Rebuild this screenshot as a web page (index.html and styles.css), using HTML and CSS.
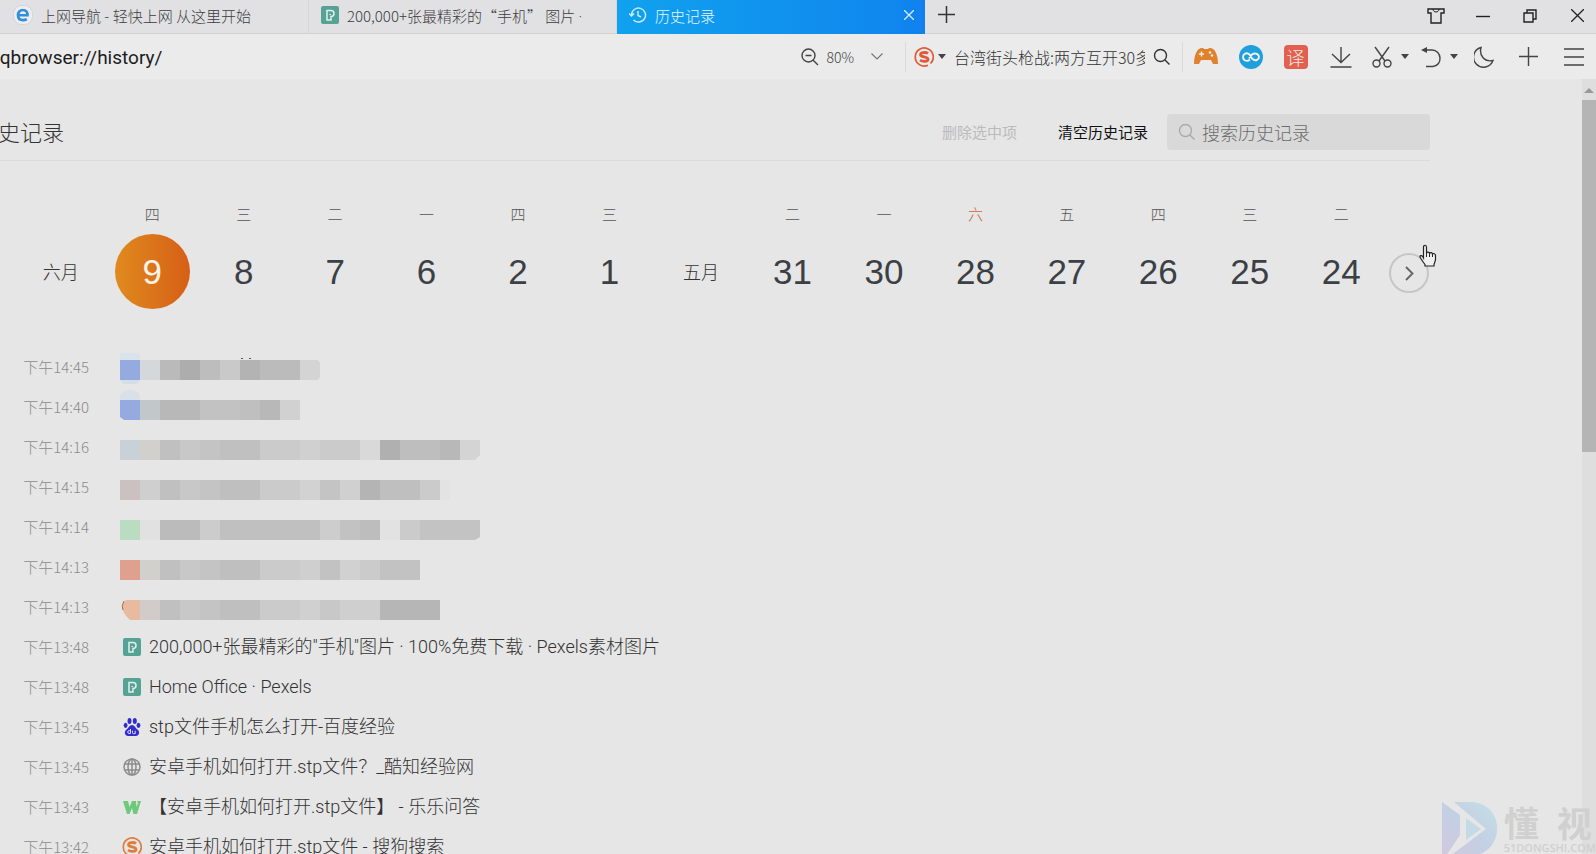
FILE: index.html
```html
<!DOCTYPE html>
<html lang="zh-CN">
<head>
<meta charset="utf-8">
<title>历史记录</title>
<link rel="stylesheet" href="styles.css">
</head>
<body>
<svg class="defs" width="0" height="0" aria-hidden="true">
  <defs>
    <symbol id="pexels" viewBox="0 0 18 18"><rect width="18" height="18" rx="2" fill="#56a396"/><path d="M6 14V4.500h4a3 3 0 0 1 3 3c0 1.800-1.200 3-3 3V14z" fill="none" stroke="#e3efec" stroke-width="1.500"/><path d="M8.500 8.500h1.500" stroke="#e3efec"/></symbol>
    <symbol id="sogou" viewBox="0 0 20 20"><path d="M16.500 16.500A9 9 0 1 0 14 18.200" fill="none" stroke="currentColor" stroke-width="1.700"/><path d="M14 6.500C12 5 6.500 5 6.500 7.700c0 2.800 7.500 1.600 7.500 4.500 0 2.700-5.500 2.700-8 1" fill="none" stroke="currentColor" stroke-width="2.800"/></symbol>
    <symbol id="search" viewBox="0 0 18 18"><circle cx="7.500" cy="7.500" r="6" fill="none" stroke="currentColor" stroke-width="1.400"/><path d="M12 12l4.500 4.500" stroke="currentColor" stroke-width="1.400"/></symbol>
    <symbol id="caret" viewBox="0 0 8 5"><path d="M0 0h8L4 5z" fill="currentColor"/></symbol>
  </defs>
</svg>

<header class="browser">
  <nav class="tabs" aria-label="标签页">
    <a class="tab" href="#nav">
      <svg class="icon20" viewBox="0 0 20 20"><rect x=".500" y=".500" width="19" height="19" rx="8" fill="#ededf1" stroke="#d3d3da"/><path d="M5 10.300h9.500C14.600 7 12.800 5 10 5a4.900 4.900 0 0 0-5 5.200c0 3 2 4.900 5 4.900 1.500 0 2.700-.300 3.800-1" fill="none" stroke="#2f8fd8" stroke-width="2.600"/></svg>
      <span class="tab-title">上网导航 - 轻快上网 从这里开始</span>
    </a>
    <a class="tab" href="#pexels-page">
      <svg class="icon18"><use href="#pexels"/></svg>
      <span class="tab-title">200,000+张最精彩的“手机” 图片 <span class="latin">·</span></span>
    </a>
    <a class="tab tab-active" href="#history" aria-current="page">
      <svg class="icon18" viewBox="0 0 18 18" fill="none" stroke="#c9ecff" stroke-width="1.500"><path d="M2.500 9a7 7 0 1 1 2 5M0 7.500l2.500 2.500L5 7.500M9 5v4.500l3 1.500"/></svg>
      <span class="tab-title">历史记录</span>
    </a>
    <button class="tab-close" aria-label="关闭标签"><svg width="10" height="10" viewBox="0 0 10 10"><path d="M0 0l10 10M10 0L0 10" stroke="#d4ebff" stroke-width="1.300"/></svg></button>
    <button class="tab-new" aria-label="新标签"><svg width="17" height="17" viewBox="0 0 17 17"><path d="M8.500 0v17M0 8.500h17" stroke="#333" stroke-width="1.500"/></svg></button>
    <div class="window-buttons">
      <button aria-label="皮肤"><svg width="18" height="16" viewBox="0 0 18 16" fill="none" stroke="#222" stroke-width="1.400"><path d="M1 1h16v4h-3v10H4V5H1z"/><path d="M6 1c0 4 6 4 6 0" stroke-width="1"/></svg></button>
      <button aria-label="最小化"><svg width="14" height="14" viewBox="0 0 14 14"><path d="M0 7.500h14" stroke="#222" stroke-width="1.400"/></svg></button>
      <button aria-label="还原"><svg width="14" height="14" viewBox="0 0 14 14" fill="none" stroke="#222" stroke-width="1.400"><path d="M1 4h9v9H1zM4 4V1h9v9h-3"/></svg></button>
      <button aria-label="关闭"><svg width="13" height="13" viewBox="0 0 13 13"><path d="M0 0l13 13M13 0L0 13" stroke="#222" stroke-width="1.300"/></svg></button>
    </div>
  </nav>

  <div class="toolbar">
    <div class="address"><input class="address-input" aria-label="地址" value="qqbrowser://history/"></div>
    <button class="zoom" aria-label="缩放 80%">
      <svg class="icon18" viewBox="0 0 18 18" fill="none" stroke="#444" stroke-width="1.400"><circle cx="7.500" cy="7.500" r="6.500"/><path d="M12.200 12.200L17 17M4.500 7.500h6"/></svg>
      <span>80%</span>
      <svg class="zoom-arrow" width="12" height="7" viewBox="0 0 12 7"><path d="M.500 .500l5.500 5.500 5.500-5.500" fill="none" stroke="#777" stroke-width="1.200"/></svg>
    </button>
    <div class="websearch">
      <button class="engine" aria-label="搜狗"><svg class="icon20"><use href="#sogou"/></svg><svg class="caret"><use href="#caret"/></svg></button>
      <input class="websearch-input" aria-label="网页搜索" value="台湾街头枪战:两方互开30多枪">
      <button aria-label="搜索"><svg class="icon18"><use href="#search"/></svg></button>
    </div>
    <div class="tools">
      <button aria-label="游戏"><svg width="24" height="17" viewBox="0 0 24 17"><path d="M3 3q1-2 4-3h2l1 1h4l1-1h2q3 1 4 3 3 5 3 13h-5l-2-4H7l-2 4H0Q0 8 3 3z" fill="#e0812b"/><path d="M7.500 3.500v5M5 6h5" stroke="#ececec" stroke-width="1.500"/><circle cx="16" cy="4.500" r="1.200" fill="#ececec"/><circle cx="18" cy="7.500" r="1.200" fill="#ececec"/></svg></button>
      <button aria-label="无限"><svg width="24" height="24" viewBox="0 0 24 24"><circle cx="12" cy="12" r="12" fill="#1f9fdc"/><path d="M11 14.500C7.500 17.500 4 15 4 12s3.500-5.500 7-2l2 3.500c3.500 3.500 7 1 7-1.500s-3.500-5-7-2.500l-3 4" fill="none" stroke="#f0f5f8" stroke-width="1.900"/></svg></button>
      <button aria-label="翻译"><span class="translate">译</span></button>
      <button aria-label="下载"><svg width="22" height="22" viewBox="0 0 22 22" fill="none" stroke="#444" stroke-width="1.400"><path d="M11 1v15M2 8l9 8.500L20 8M.500 21h21"/></svg></button>
      <button class="with-caret" aria-label="截图"><svg width="20" height="22" viewBox="0 0 20 22" fill="none" stroke="#444" stroke-width="1.400"><path d="M3 1l10 14M17 1L7 15"/><circle cx="4.500" cy="17.500" r="3.500"/><circle cx="15.500" cy="17.500" r="3.500"/></svg><svg class="caret"><use href="#caret"/></svg></button>
      <button class="with-caret" aria-label="恢复"><svg width="20" height="22" viewBox="0 0 20 22" fill="none" stroke="#444" stroke-width="1.400"><path d="M2 4h9c10 0 11 15.500 1 16.500H5"/><path d="M0 4l6-3v6z" fill="#444" stroke="none"/></svg><svg class="caret"><use href="#caret"/></svg></button>
      <button aria-label="夜间"><svg width="20" height="22" viewBox="0 0 20 22"><path d="M7 1.500A10 10 0 1 0 19 14.500C10 16.500 5 9 7 1.500z" fill="none" stroke="#444" stroke-width="1.400"/></svg></button>
      <button aria-label="添加"><svg width="19" height="19" viewBox="0 0 19 19"><path d="M9.500 0v19M0 9.500h19" stroke="#444" stroke-width="1.400"/></svg></button>
      <button aria-label="菜单"><svg width="20" height="18" viewBox="0 0 20 18"><path d="M0 1h20M0 9h20M0 17h20" stroke="#444" stroke-width="1.400"/></svg></button>
    </div>
  </div>
</header>

<div class="viewport">
  <main class="page">
    <div class="page-head">
      <h1 class="page-title">历史记录</h1>
      <button class="action" disabled>删除选中项</button>
      <button class="action">清空历史记录</button>
      <label class="history-search"><svg class="icon18"><use href="#search"/></svg><input aria-label="搜索历史记录" placeholder="搜索历史记录"></label>
    </div>

    <div class="calendar">
      <div class="days">
        <div class="month">六月</div>
        <button class="day day-active"><span class="week">四</span><span class="num">9</span></button>
        <button class="day"><span class="week">三</span><span class="num">8</span></button>
        <button class="day"><span class="week">二</span><span class="num">7</span></button>
        <button class="day"><span class="week">一</span><span class="num">6</span></button>
        <button class="day"><span class="week">四</span><span class="num">2</span></button>
        <button class="day"><span class="week">三</span><span class="num">1</span></button>
        <div class="month">五月</div>
        <button class="day"><span class="week">二</span><span class="num">31</span></button>
        <button class="day"><span class="week">一</span><span class="num">30</span></button>
        <button class="day day-weekend"><span class="week">六</span><span class="num">28</span></button>
        <button class="day"><span class="week">五</span><span class="num">27</span></button>
        <button class="day"><span class="week">四</span><span class="num">26</span></button>
        <button class="day"><span class="week">三</span><span class="num">25</span></button>
        <button class="day"><span class="week">二</span><span class="num">24</span></button>
      </div>
      <button class="more" aria-label="更早"><svg width="9" height="15" viewBox="0 0 9 15"><path d="M1 1l6.500 6.500L1 14" fill="none" stroke="#666" stroke-width="1.900"/></svg>
        <svg class="pointer" width="18" height="24" viewBox="0 0 18 24"><path d="M4.500 14V3.200c0-2.600 3-2.600 3 0V9c.500-1.300 2.800-1.200 3 .300.700-1 2.700-.800 2.900.700 1-1 3.100-.300 3.100 1.500v4c0 2-1.500 3.500-1.500 5.500V22H6v-1.500C4 18 2.500 15.500 1.200 13.500c-.700-2 1.300-2.500 2.300-1.200z" fill="#f0f0f0" stroke="#222" stroke-width="1.200"/><path d="M7.500 9v4M10.500 9.500V13M13.500 10v3" stroke="#222"/></svg>
      </button>
    </div>

    <ul class="history">
      <li class="row"><time class="time">下午14:45</time><svg class="mosaic" viewBox="0 0 360 40"><path fill="#dae3eb" d="M2 6h16l2 2v5H0V7z"/><path fill="#d2dfe6" d="M0 33h20v1l-4 3H3z"/><path fill="#95abdf" d="M0 13h20v20H0z"/><path fill="#d4d8da" d="M20 13h20v20H20z"/><path fill="#bababa" d="M40 13h20v20H40z"/><path fill="#adadad" d="M60 13h20v20H60z"/><path fill="#bdbdbd" d="M80 13h20v20H80z"/><path fill="#c9c9c9" d="M100 13h20v20h-20z"/><path fill="#b3b3b3" d="M120 13h20v20h-20z"/><path fill="#bbb" d="M140 13h40v20h-40z"/><path fill="#d4d4d4" d="M180 13h16q4 0 4 4v12q0 4-4 4h-16z"/><path fill="#555" d="M121 11h2v1h-2zM129 11h2v1h-2z"/></svg></li>
      <li class="row"><time class="time">下午14:40</time><svg class="mosaic" viewBox="0 0 360 40"><path fill="#dae0ea" d="M0 13V7q10-9 20 0v6z"/><path fill="#95abdf" d="M0 13h20v20H4l-4-3z"/><path fill="#c2c8ca" d="M20 13h20v20H20z"/><path fill="#b8b8b8" d="M40 13h40v20H40z"/><path fill="#c2c2c2" d="M80 13h40v20H80z"/><path fill="#bfbfbf" d="M120 13h20v20h-20z"/><path fill="#b8b8b8" d="M140 13h20v20h-20z"/><path fill="#d1d1d1" d="M160 13h20v20h-20z"/></svg></li>
      <li class="row"><time class="time">下午14:16</time><svg class="mosaic" viewBox="0 0 360 40"><path fill="#c8d0d8" d="M0 13h20v20H0z"/><path fill="#d2d0cd" d="M20 13h20v20H20z"/><path fill="#c0c0c0" d="M40 13h20v20H40z"/><path fill="#c8c8c8" d="M60 13h20v20H60z"/><path fill="#c4c4c4" d="M80 13h20v20H80z"/><path fill="#c0c0c0" d="M100 13h40v20h-40z"/><path fill="#cbcbcb" d="M140 13h40v20h-40z"/><path fill="#d0d0d0" d="M180 13h20v20h-20z"/><path fill="#cbcbcb" d="M200 13h40v20h-40z"/><path fill="#d9d9d9" d="M240 13h20v20h-20z"/><path fill="#b0b0b0" d="M260 13h20v20h-20z"/><path fill="#bebebe" d="M280 13h40v20h-40z"/><path fill="#b8b8b8" d="M320 13h20v20h-20z"/><path fill="#d4d4d4" d="M340 13h20v15l-5 5h-15z"/></svg></li>
      <li class="row"><time class="time">下午14:15</time><svg class="mosaic" viewBox="0 0 360 40"><path fill="#cbc1c1" d="M0 13h20v20H0z"/><path fill="#cfcfcf" d="M20 13h20v20H20z"/><path fill="#c0c0c0" d="M40 13h20v20H40z"/><path fill="#c8c8c8" d="M60 13h20v20H60z"/><path fill="#c4c4c4" d="M80 13h20v20H80z"/><path fill="#bfbfbf" d="M100 13h40v20h-40z"/><path fill="#cbcbcb" d="M140 13h40v20h-40z"/><path fill="#d2d2d2" d="M180 13h20v20h-20z"/><path fill="#c4c4c4" d="M200 13h20v20h-20z"/><path fill="#d0d0d0" d="M220 13h20v20h-20z"/><path fill="#b4b4b4" d="M240 13h20v20h-20z"/><path fill="#bfbfbf" d="M260 13h40v20h-40z"/><path fill="#cbcbcb" d="M300 13h20v20h-20z"/><path fill="#e3e3e3" d="M320 13h10v20h-10z"/></svg></li>
      <li class="row"><time class="time">下午14:14</time><svg class="mosaic" viewBox="0 0 360 40"><path fill="#badcc0" d="M0 13h20v20H0z"/><path fill="#e0e1e0" d="M20 13h20v20H20z"/><path fill="#bbb" d="M40 13h40v20H40z"/><path fill="#ccc" d="M80 13h20v20H80z"/><path fill="#c0c0c0" d="M100 13h100v20H100z"/><path fill="#cdcdcd" d="M200 13h20v20h-20z"/><path fill="#c2c2c2" d="M220 13h20v20h-20z"/><path fill="#bdbdbd" d="M240 13h20v20h-20z"/><path fill="#e2e2e2" d="M260 13h20v20h-20z"/><path fill="#cbcbcb" d="M280 13h20v20h-20z"/><path fill="#c3c3c3" d="M300 13h60v17l-5 3h-55z"/></svg></li>
      <li class="row"><time class="time">下午14:13</time><svg class="mosaic" viewBox="0 0 360 40"><path fill="#e0a090" d="M0 13h20v20H0z"/><path fill="#d2d0cd" d="M20 13h20v20H20z"/><path fill="#c0c0c0" d="M40 13h20v20H40z"/><path fill="#c8c8c8" d="M60 13h20v20H60z"/><path fill="#c4c4c4" d="M80 13h20v20H80z"/><path fill="#bfbfbf" d="M100 13h40v20h-40z"/><path fill="#cbcbcb" d="M140 13h40v20h-40z"/><path fill="#cfcfcf" d="M180 13h20v20h-20z"/><path fill="#c2c2c2" d="M200 13h20v20h-20z"/><path fill="#d1d1d1" d="M220 13h20v20h-20z"/><path fill="#cbcbcb" d="M240 13h20v20h-20z"/><path fill="#c2c2c2" d="M260 13h40v20h-40z"/></svg></li>
      <li class="row"><time class="time">下午14:13</time><svg class="mosaic" viewBox="0 0 360 40"><path fill="#e8bba0" d="M6 13h14v20H10q-13-12-4-20z"/><path fill="none" stroke="#a56b45" d="M4 14q-3 5-1 9"/><path fill="#d1cbc9" d="M20 13h20v20H20z"/><path fill="#c0c0c0" d="M40 13h20v20H40z"/><path fill="#c8c8c8" d="M60 13h20v20H60z"/><path fill="#c4c4c4" d="M80 13h20v20H80z"/><path fill="#bfbfbf" d="M100 13h40v20h-40z"/><path fill="#cbcbcb" d="M140 13h40v20h-40z"/><path fill="#d0d0d0" d="M180 13h20v20h-20z"/><path fill="#c8c8c8" d="M200 13h20v20h-20z"/><path fill="#cfcfcf" d="M220 13h40v20h-40z"/><path fill="#b6b6b6" d="M260 13h60v20h-60z"/></svg></li>
      <li class="row"><time class="time">下午13:48</time><a class="entry" href="#1"><svg class="icon18"><use href="#pexels"/></svg>200,000+张最精彩的"手机"图片 · 100%免费下载 · Pexels素材图片</a></li>
      <li class="row"><time class="time">下午13:48</time><a class="entry" href="#2"><svg class="icon18"><use href="#pexels"/></svg>Home Office · Pexels</a></li>
      <li class="row"><time class="time">下午13:45</time><a class="entry" href="#3"><svg class="icon18" viewBox="0 0 18 18"><g fill="#322cd0"><ellipse cx="6.500" cy="3" rx="2" ry="3"/><ellipse cx="11.800" cy="3" rx="2" ry="3"/><ellipse cx="2.600" cy="7.300" rx="1.900" ry="2.600"/><ellipse cx="15.500" cy="7.300" rx="1.900" ry="2.600"/><path d="M9 7c2.500 0 3.500 3 5.500 4.500 3 2.500 1.500 6.500-1.500 6.500H5c-3 0-4.500-4-1.500-6.500C5.500 10 6.500 7 9 7z"/></g><path d="M7.500 11v4.500H6q-1.300-.200-1.300-1.500T6 12.700h1.500M9.500 12.700v2q0 .900 1 .900h1.700v-2.900" fill="none" stroke="#d9dcf2"/></svg>stp文件手机怎么打开-百度经验</a></li>
      <li class="row"><time class="time">下午13:45</time><a class="entry" href="#4"><svg class="icon18" viewBox="0 0 18 18" fill="none" stroke="#8c8c8c" stroke-width="1.500"><circle cx="9" cy="9" r="8"/><ellipse cx="9" cy="9" rx="4" ry="8"/><path d="M9 1v16M1.500 6h15M1.500 12h15"/></svg>安卓手机如何打开.stp文件？_酷知经验网</a></li>
      <li class="row"><time class="time">下午13:43</time><a class="entry" href="#5"><svg class="icon18" viewBox="0 0 18 18"><path d="M0 3h5l1.500 6L9 3h4l.500 6L15 5l-1-2h4l-4 13h-3.500L9 10l-2.500 6H4z" fill="#6fc97b"/></svg>【安卓手机如何打开.stp文件】 - 乐乐问答</a></li>
      <li class="row"><time class="time">下午13:42</time><a class="entry entry-sogou" href="#6"><svg class="icon20"><use href="#sogou"/></svg><span>安卓手机如何打开.stp文件 - 搜狗搜索</span></a></li>
    </ul>
  </main>
  <div class="scrollbar" aria-hidden="true">
    <svg width="10" height="5" viewBox="0 0 10 5"><path d="M0 5h10L5 0z" fill="#999"/></svg>
    <div class="thumb"></div>
  </div>
</div>

<div class="watermark">
  <svg width="56" height="54" viewBox="0 0 56 54"><defs><linearGradient id="wm" x1="0" y1="1" x2="1" y2="0"><stop offset="0" stop-color="#d2c8e0"/><stop offset=".500" stop-color="#c3d0e4"/><stop offset="1" stop-color="#c4e0e6"/></linearGradient></defs><path d="M0 0l18 13v20L4 54H0zM12 0h18c34 2 34 52-2 54H8l36-27z" fill="url(#wm)"/><path d="M24 16v22l15-11z" fill="#c4dbe6"/></svg>
  <div class="watermark-text"><span class="watermark-name"><span>懂</span><span>视</span></span><span class="watermark-site">51DONGSHI.COM</span></div>
</div>
</body>
</html>
```
FILE: styles.css
```css
* { box-sizing: border-box; }

html, body { height: 100%; }

body {
  margin: 0;
  display: flex;
  flex-direction: column;
  overflow: hidden;
  position: relative;
  background: #e6e6e6;
  color: #333;
  font-family: "Noto Sans CJK SC", sans-serif;
  font-weight: 300;
}

button, input {
  font: inherit;
  color: inherit;
  border: 0;
  padding: 0;
  margin: 0;
  background: none;
  outline: 0;
}

button { display: flex; align-items: center; justify-content: center; }
a { color: inherit; text-decoration: none; }
svg { flex: none; display: block; }

.defs { position: absolute; }
.icon18 { width: 18px; height: 18px; }
.icon20 { width: 20px; height: 20px; }
.caret { width: 8px; height: 5px; color: #444; }
.latin { font-family: Roboto, sans-serif; }

/* Tab strip */
.browser { flex: none; }

.tabs {
  display: flex;
  height: 34px;
  padding-left: 1px;
  background: #e1e1e3;
  box-shadow: inset 0 -1px #d2d2d4;
}

.tab {
  flex: 0 1 308px;
  min-width: 0;
  display: flex;
  align-items: center;
  gap: 8px;
  padding: 0 12px 4px;
  border-right: 1px solid #d6d6d9;
  font-size: 15px;
  color: #3c3c40;
}

.tab-title { white-space: nowrap; overflow: hidden; }

.tab-active {
  flex-basis: 276px;
  border: 0;
  background: linear-gradient(90deg, #10a2ee, #1087ee);
  color: #e9f7ff;
}

.tab-close { width: 32px; padding-bottom: 4px; background: linear-gradient(90deg, #1087ee, #1080ee); }
.tab-new { width: 42px; padding-bottom: 5px; }

.window-buttons {
  display: flex;
  gap: 23px;
  margin-left: auto;
  padding: 0 7px 3px 0;
}

.window-buttons button { width: 24px; }

/* Toolbar */
.toolbar {
  display: flex;
  align-items: center;
  height: 45px;
  background: #ebebeb;
}

.address { flex: 1; min-width: 0; overflow: hidden; }

.address-input {
  width: 100%;
  margin-left: -11px;
  font-family: Roboto, sans-serif;
  font-size: 19px;
  font-weight: 400;
  color: #1c1c1c;
}

.zoom { gap: 7px; font-size: 14px; color: #444; padding-right: 22px; }
.zoom-arrow { margin-left: 10px; }

.websearch {
  display: flex;
  align-items: center;
  gap: 8px;
  width: 278px;
  height: 30px;
  padding: 0 11px 0 8px;
  border-left: 1px solid #dadada;
  border-right: 1px solid #dadada;
  font-size: 16px;
  color: #333;
}

.engine { gap: 4px; color: #e05a3a; }
.websearch-input { flex: 1; min-width: 0; }

.tools { display: flex; }
.tools button { width: 45px; height: 45px; }
.tools .with-caret { width: 49px; gap: 9px; padding-left: 5px; }

.translate {
  width: 24px;
  height: 24px;
  border-radius: 4px;
  background: #e2604f;
  color: #f7e9e6;
  font-size: 18px;
  line-height: 24px;
  text-align: center;
}

/* History page */
.viewport { flex: 1; min-height: 0; display: flex; overflow: hidden; }
.page { flex: 1; min-width: 0; padding-right: 152px; }

.page-head {
  display: flex;
  align-items: center;
  height: 82px;
  padding-top: 24px;
  border-bottom: 1px solid #dbdbdb;
}

.page-title {
  flex: 1;
  margin: 0 0 2px -24px;
  font-size: 22px;
  font-weight: 300;
  white-space: nowrap;
}

.action { margin-right: 41px; font-size: 15px; font-weight: 400; color: #111; white-space: nowrap; }
.action + .action { margin-right: 19px; }
.action:disabled { color: #bbb; }

.history-search {
  display: flex;
  align-items: center;
  gap: 6px;
  width: 263px;
  height: 36px;
  padding-left: 11px;
  border-radius: 4px;
  background: #d9d9d9;
  color: #aaa;
}

.history-search input { flex: 1; min-width: 0; font-size: 18px; color: #444; }
.history-search input::placeholder { color: #6c6c6c; opacity: 1; }

.calendar {
  display: flex;
  padding: 43px 0 0 15px;
}

.days { flex: 1; display: grid; grid-template-columns: repeat(15, 1fr); }

.month {
  align-self: end;
  font-size: 18px;
  line-height: 75px;
  text-align: center;
}

.day { flex-direction: column; gap: 10px; }
.week { font-size: 15px; line-height: 20px; color: #555; }
.day-weekend .week { color: #c7673a; }

.num {
  width: 75px;
  border-radius: 50%;
  font-family: "Liberation Sans", Arial, sans-serif;
  font-size: 35px;
  font-weight: 400;
  line-height: 75px;
  color: #3b4045;
}

.day-active .num { background: linear-gradient(90deg, #e08a1e, #d65f17); color: #fdf3e6; }

.more {
  position: relative;
  width: 40px;
  height: 40px;
  margin: 49px 1px 0 2px;
  border: 2px solid #c6c6c6;
  border-radius: 50%;
}

.pointer { position: absolute; left: 28px; top: -11px; }

.history { list-style: none; margin: 0; padding: 38px 0 0; }

.row { display: flex; height: 40px; line-height: 40px; }

.time { width: 89px; margin-right: 31px; text-align: right; font-size: 15px; color: #8c8c8c; }

.mosaic { width: 360px; height: 40px; }

.entry {
  display: flex;
  align-items: center;
  gap: 8px;
  padding-left: 3px;
  font-family: Roboto, "Noto Sans CJK SC", sans-serif;
  font-size: 18px;
  white-space: nowrap;
}

.entry-sogou { gap: 7px; padding-left: 2px; }
.entry-sogou svg { color: #e07c3c; }

.scrollbar {
  width: 14px;
  padding-top: 9px;
  display: flex;
  flex-direction: column;
  align-items: center;
  gap: 7px;
  background: #dedede;
}

.thumb { width: 100%; height: 46%; background: #b5b5b5; }

/* Corner watermark over the page */
.watermark {
  position: absolute;
  right: 0;
  bottom: -2px;
  display: flex;
  gap: 6px;
  color: #d0d0d0;
  font-weight: 700;
}

.watermark-text { display: flex; flex-direction: column; }
.watermark-name { display: flex; gap: 18px; font-size: 35px; line-height: 40px; }
.watermark-site { font-family: "Open Sans", sans-serif; font-size: 11px; line-height: 12px; font-weight: 600; }
```
